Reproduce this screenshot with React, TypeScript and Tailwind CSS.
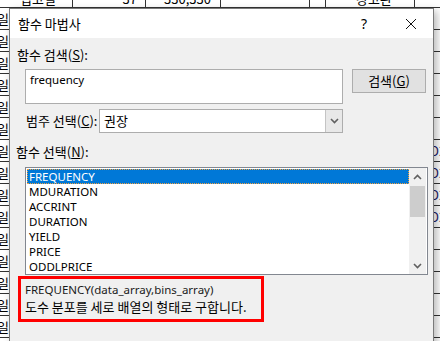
import React from 'react';

const ko = { fontFamily: '"Noto Sans CJK KR", "Noto Sans", sans-serif' };
const en = { fontFamily: '"Noto Sans", "Noto Sans CJK KR", sans-serif' };

const functions = ['FREQUENCY', 'MDURATION', 'ACCRINT', 'DURATION', 'YIELD', 'PRICE', 'ODDLPRICE'];

function Sheet() {
  const rows = Array.from({ length: 16 }, (_, i) => i);
  return (
    <div className="absolute inset-0 overflow-hidden bg-white" style={ko}>
      {/* top row, only the bottom of it peeks out */}
      <div className="flex h-[8px] border-b border-[#333] text-[13px] leading-[13px] text-black">
        <div className="w-[73px] border-r border-[#333] pl-[20px] -mt-[8px]">입고일</div>
        <div className="w-[73px] border-r border-[#333] pr-[8px] text-right -mt-[8px]">37</div>
        <div className="w-[75px] border-r border-[#333] pl-[18px] -mt-[8px]">330,330</div>
        <div className="w-[89px] border-r border-[#333]" />
        <div className="w-[16px] border-r border-[#333]" />
        <div className="w-[89px] border-r border-[#333] pl-[30px] -mt-[8px]">창고관</div>
        <div className="flex-1" />
      </div>
      <div className="flex flex-col">
        {rows.map((r) => (
          <div key={r} className="flex h-[22px] border-b border-[#333] text-[13px] leading-[22px]">
            <div className="w-[9px] overflow-hidden whitespace-nowrap">
              <span className="-ml-[3px] inline-block">일</span>
            </div>
            <div className="flex-1" />
            <div className="w-[8px] overflow-hidden whitespace-nowrap text-[#1a1a6a]">
              {r >= 6 && r <= 9 ? <span className="-ml-[2px] inline-block">D2</span> : null}
            </div>
          </div>
        ))}
      </div>
    </div>
  );
}

function Chevron({ down }: { down?: boolean }) {
  return (
    <svg width="9" height="6" viewBox="0 0 9 6" className="block">
      <path
        d={down ? 'M1 1 L4.5 4.5 L8 1' : 'M1 5 L4.5 1.5 L8 5'}
        fill="none"
        stroke="#606060"
        strokeWidth="1.6"
      />
    </svg>
  );
}

export default function App() {
  return (
    <div className="relative h-[341px] w-[440px] overflow-hidden">
      <Sheet />
      <div className="absolute left-[9px] top-[8px] flex h-[345px] w-[425px] flex-col border border-[#7a7a7a] bg-[#f0f0f0] shadow-[3px_3px_8px_rgba(0,0,0,0.28)]">
        {/* title bar */}
        <div className="flex h-[29px] shrink-0 items-center bg-white">
          <div className="pl-[8px] text-[13px] leading-[16px] text-black" style={ko}>
            함수 마법사
          </div>
          <div className="flex-1" />
          <div className="w-[12px] text-[14px] leading-[16px] text-black" style={en}>?</div>
          <div className="ml-[32px] mr-[16px]">
            <svg width="12" height="12" viewBox="0 0 12 12" className="block">
              <path d="M1 1 L11 11 M11 1 L1 11" stroke="#111" strokeWidth="1" />
            </svg>
          </div>
        </div>

        <div className="flex flex-col pt-[9px] text-[13px] text-black" style={ko}>
          <div className="h-[16px] pl-[7px] leading-[16px]">
            함수 검색(<span className="underline">S</span>):
          </div>

          <div className="mt-[6px] flex items-start pl-[15px]">
            <div className="h-[35px] w-[318px] border border-[#adadad] bg-white px-[4px] pt-[2px] text-[11.5px] leading-[16px]" style={en}>
              frequency
            </div>
            <div className="ml-[9px] flex h-[24px] w-[74px] items-center justify-center border border-[#adadad] bg-[#e1e1e1] leading-[16px]">
              검색(<span className="underline">G</span>)
            </div>
          </div>

          <div className="mt-[5px] flex items-center pl-[16px]">
            <div className="w-[73px] whitespace-nowrap leading-[16px]">
              범주 선택(<span className="underline">C</span>):
            </div>
            <div className="flex h-[24px] w-[244px] border border-[#adadad] bg-white">
              <div className="flex-1 pl-[4px] leading-[22px]">권장</div>
              <div className="flex w-[17px] items-center justify-center border-l border-[#c4c4c4] bg-[#e8e8e8]">
                <Chevron down />
              </div>
            </div>
          </div>

          <div className="mt-[11px] h-[16px] pl-[6px] leading-[16px]">
            함수 선택(<span className="underline">N</span>):
          </div>

          <div className="ml-[15px] mt-[7px] flex h-[108px] w-[403px] border border-[#828790] bg-white text-[11.5px]">
            <div className="flex flex-1 flex-col pl-[1px] pt-[1px]" style={en}>
              {functions.map((f, i) => (
                <div
                  key={f}
                  className={
                    i === 0
                      ? 'h-[15px] border border-dotted border-[#f0a040] bg-[#0078d7] pl-[1px] leading-[13px] text-white'
                      : 'h-[15px] pl-[2px] leading-[15px] text-black'
                  }
                >
                  {f}
                </div>
              ))}
            </div>
            <div className="flex w-[17px] flex-col bg-[#f0f0f0]">
              <div className="flex h-[17px] items-center justify-center">
                <Chevron />
              </div>
              <div className="mx-[1px] mt-[1px] h-[31px] bg-[#cdcdcd]" />
              <div className="flex-1" />
              <div className="flex h-[17px] items-center justify-center">
                <Chevron down />
              </div>
            </div>
            <div className="w-[1px]" />
          </div>

          <div className="ml-[8px] mt-[1px] flex h-[46px] w-[246px] flex-col border-[3px] border-[#ff0000] pl-[4px] pt-[2px]">
            <div className="h-[17px] text-[11.5px] leading-[17px] text-[#1a1a1a]" style={en}>
              FREQUENCY(data_array,bins_array)
            </div>
            <div className="h-[18px] whitespace-nowrap leading-[18px]">도수 분포를 세로 배열의 형태로 구합니다.</div>
          </div>
        </div>
      </div>
    </div>
  );
}
